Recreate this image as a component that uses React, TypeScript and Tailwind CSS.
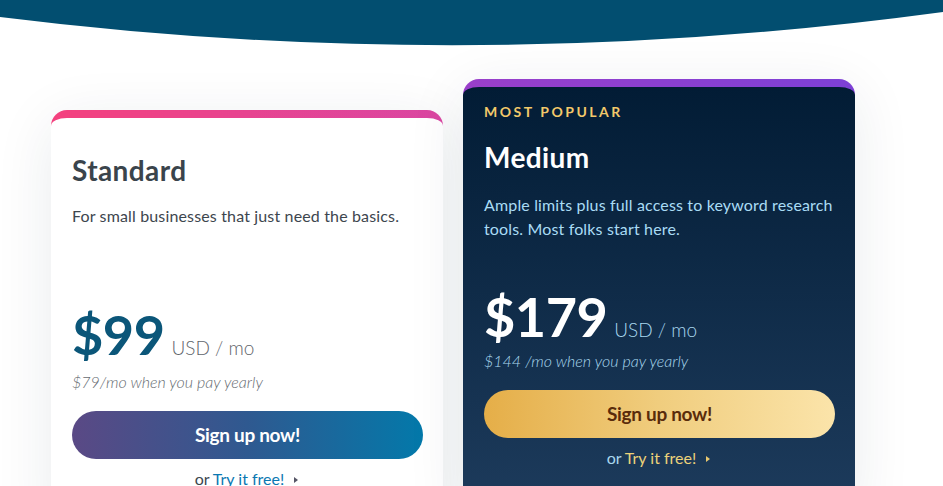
import React from "react";

function Caret({ color }: { color: string }) {
  return (
    <svg width="6" height="8" viewBox="0 0 6 8" className="inline-block ml-[9px] align-middle" style={{ marginTop: -2 }}>
      <path d="M1 1 L5 4 L1 7 Z" fill={color} />
    </svg>
  );
}

export default function App() {
  return (
    <div className="relative w-[943px] h-[486px] overflow-hidden bg-white font-['Lato',sans-serif]">
      <svg width="943" height="46" viewBox="0 0 943 46" className="block">
        <path d="M0 0 H943 V12 Q471 76 0 17 Z" fill="#024e70" />
      </svg>
      <div className="flex items-start gap-[20px] pl-[51px]">
        {/* Standard */}
        <div className="mt-[64px] w-[392px] rounded-t-[16px] border-t-8 border-transparent shadow-[0_12px_60px_rgba(20,40,70,0.09)] [background:linear-gradient(#fff,#fff)_padding-box,linear-gradient(90deg,#f4417e,#da46a2)_border-box] px-[21px] pb-[40px]">
          <h2 className="pt-[35px] text-[28px] leading-[34px] font-bold tracking-[0.4px] text-[#3a444c]">Standard</h2>
          <p className="mt-[17px] h-[72px] text-[16px] leading-[24px] tracking-[0.15px] text-[#3d464e]">For small businesses that just need the basics.</p>
          <div className="mt-[31px] flex items-baseline">
            <span className="text-[54px] leading-[56px] font-bold text-[#0b5679] tracking-[-0.5px]">$99</span>
            <span className="ml-[7px] text-[19px] font-light text-[#5f666c]">USD / mo</span>
          </div>
          <p className="mt-[9px] text-[16px] leading-[20px] italic font-light text-[#666c71]">$79/mo when you pay yearly</p>
          <button className="mt-[19px] w-[351px] h-[48px] rounded-full bg-[linear-gradient(90deg,#5a4985,#2f5990_50%,#0379aa)] text-white text-[19px] font-bold tracking-[-0.3px]">
            Sign up now!
          </button>
          <p className="mt-[10px] text-center text-[16px] leading-[20px] text-[#3d464e]">
            or <span className="text-[#0b78b2]">Try it free!</span>
            <Caret color="#556" />
          </p>
        </div>
        {/* Medium */}
        <div className="mt-[33px] w-[392px] rounded-t-[16px] border-t-8 border-transparent shadow-[0_12px_60px_rgba(20,40,70,0.09)] [background:linear-gradient(180deg,#021c35,#1d3b5c_420px)_padding-box,linear-gradient(90deg,#9a3fca,#7d40d6)_border-box] px-[21px] pb-[40px]">
          <p className="pt-[16px] text-[14px] leading-[18px] font-bold tracking-[0.18em] text-[#f3c96a]">MOST POPULAR</p>
          <h2 className="mt-[19px] text-[28px] leading-[34px] font-bold tracking-[0.4px] text-white">Medium</h2>
          <p className="mt-[19px] h-[72px] text-[16px] leading-[24px] tracking-[0.15px] text-[#a9dcf5]">Ample limits plus full access to keyword research tools. Most folks start here.</p>
          <div className="mt-[24px] flex items-baseline">
            <span className="text-[54px] leading-[56px] font-bold text-white tracking-[-0.5px]">$179</span>
            <span className="ml-[7px] text-[19px] font-light text-[#a9d8ee]">USD / mo</span>
          </div>
          <p className="mt-[6px] text-[16px] leading-[20px] italic font-light text-[#a9d8ee]">$144 /mo when you pay yearly</p>
          <button className="mt-[19px] w-[351px] h-[48px] rounded-full bg-[linear-gradient(90deg,#e5ae48,#f0cd7e_50%,#fbe4aa)] text-[#5a2c0b] text-[19px] font-bold tracking-[-0.3px]">
            Sign up now!
          </button>
          <p className="mt-[10px] text-center text-[16px] leading-[20px] text-[#a9d8ee]">
            or <span className="text-[#ecd27a]">Try it free!</span>
            <Caret color="#e8c870" />
          </p>
        </div>
      </div>
    </div>
  );
}
